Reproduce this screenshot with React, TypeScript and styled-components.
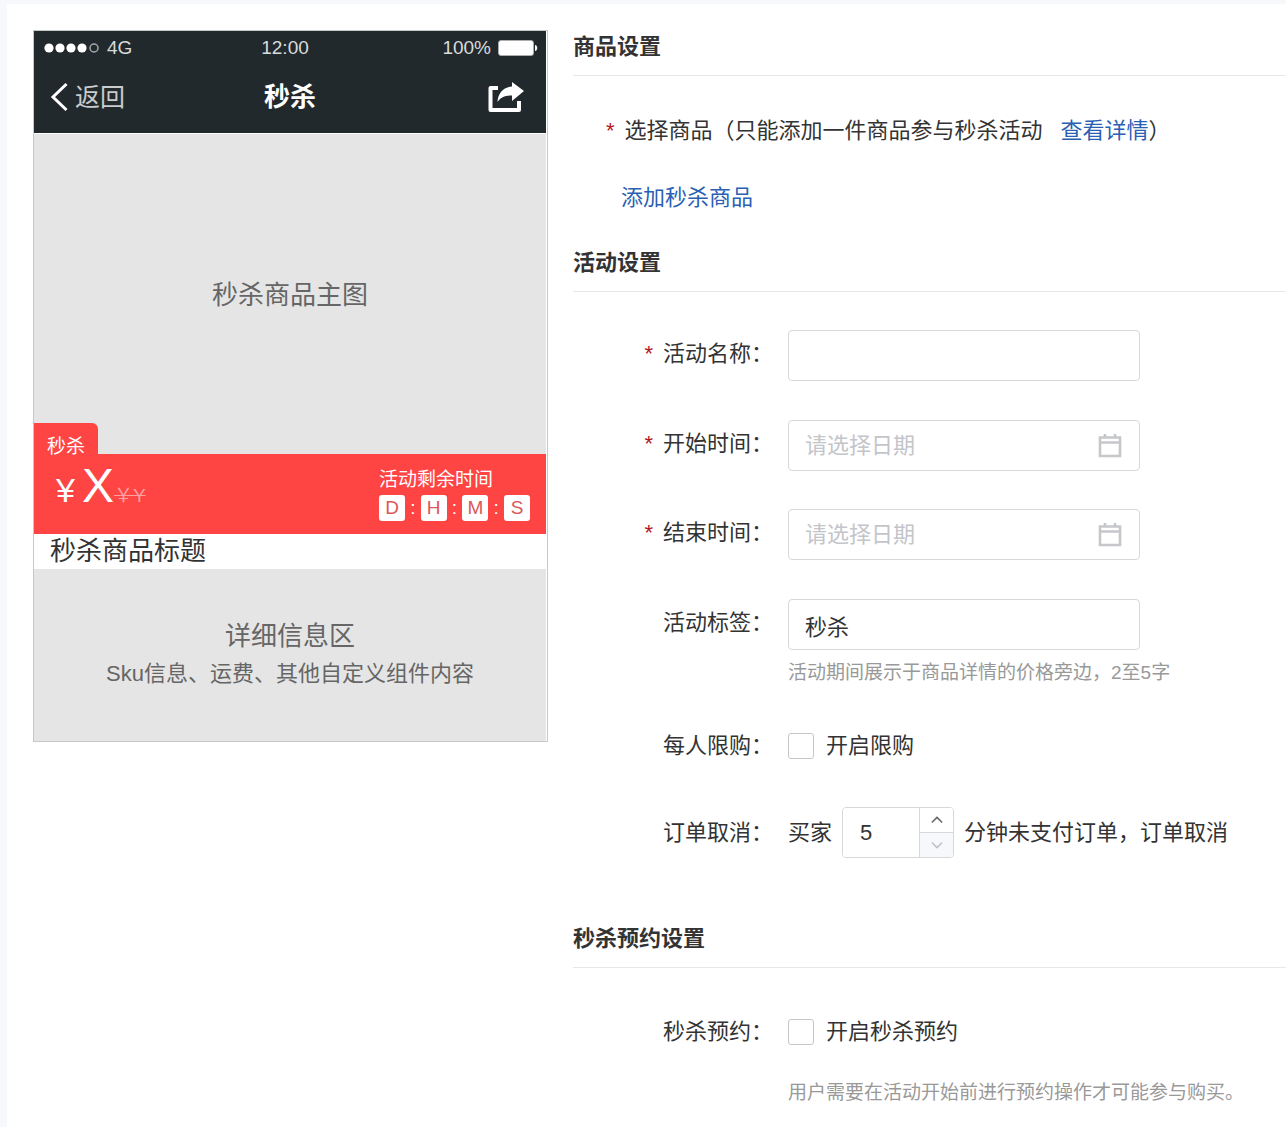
import React, { useState } from "react";
import styled, { createGlobalStyle } from "styled-components";

const GlobalStyle = createGlobalStyle`
  *, *::before, *::after { box-sizing: border-box; }
  body {
    margin: 0;
    background: #f7f8fc;
    color: #333;
    font: 22px/32px "Liberation Sans", "Noto Sans CJK SC", sans-serif;
  }
  button, input { font: inherit; color: inherit; }
  h1, h2, p { margin: 0; }
`;

const Page = styled.main`
  display: flex;
  align-items: flex-start;
  gap: 25px;
  min-height: calc(100vh - 4px);
  margin: 4px 0 0 7px;
  padding: 26px 0 16px 26px;
  background: #fff;
`;

const Phone = styled.section`
  flex: 0 0 515px;
  padding-right: 1px;
  border: 1px solid #c8c8c8;
  background: #fff;
  color: #666;
`;

const PhoneHeader = styled.header`
  height: 102px;
  margin-bottom: 1px;
  background: #22292c;
  color: #fff;
`;

const StatusBar = styled.div`
  display: grid;
  grid-template-columns: 1fr auto 1fr;
  align-items: center;
  height: 34px;
  padding: 0 8px 0 10px;
  color: #d9dbdc;
  font-size: 19px;
  line-height: 24px;
`;

const StatusGroup = styled.div<{ $end?: boolean }>`
  display: flex;
  align-items: center;
  justify-content: ${(p) => (p.$end ? "flex-end" : "flex-start")};
  gap: 7px;
`;

const Clock = styled.span`
  padding-right: 12px;
`;

const TitleBar = styled.div`
  display: grid;
  grid-template-columns: 1fr auto 1fr;
  align-items: center;
  height: 64px;
  padding: 0 22px 0 16px;
`;

const BackButton = styled.button`
  display: flex;
  align-items: center;
  gap: 6px;
  justify-self: start;
  padding: 0;
  border: 0;
  background: none;
  color: #c9cbcc;
  font-size: 25px;
  line-height: 36px;
`;

const ShareButton = styled.button`
  display: flex;
  justify-self: end;
  padding: 0;
  border: 0;
  background: none;
`;

const PhoneTitle = styled.h1`
  padding-left: 6px;
  font-size: 26px;
  line-height: 36px;
`;

const ImageArea = styled.div`
  display: flex;
  flex-direction: column;
  height: 320px;
  background: #e5e5e5;
`;

const ImageText = styled.div`
  flex: 1;
  padding-top: 143px;
  text-align: center;
  font-size: 26px;
  line-height: 36px;
`;

const Tag = styled.span`
  align-self: flex-start;
  height: 31px;
  padding: 8px 13px 0 13px;
  border-radius: 0 6px 0 0;
  background: #ff4444;
  color: #fff;
  font-size: 19px;
  line-height: 32px;
`;

const PriceBar = styled.div`
  display: flex;
  justify-content: space-between;
  height: 80px;
  padding: 0 16px 0 22px;
  background: #ff4444;
  color: #fff;
`;

const Price = styled.div`
  display: flex;
  align-items: baseline;
  font-size: 34px;
  line-height: 64px;
`;

const Amount = styled.span`
  padding-left: 7px;
  font-size: 48px;
`;

const OldPrice = styled.del`
  color: #ffa0a0;
  font-size: 19px;
`;

const Countdown = styled.div`
  padding-top: 12px;
  font-size: 19px;
  line-height: 28px;
`;

const Units = styled.div`
  display: flex;
  align-items: center;
  justify-content: space-between;
  width: 151px;
`;

const Unit = styled.span`
  width: 26px;
  border-radius: 3px;
  background: #fff;
  color: #dd5757;
  text-align: center;
  line-height: 26px;
`;

const ProductTitle = styled.p`
  padding: 0 16px;
  color: #333;
  font-size: 26px;
  line-height: 35px;
`;

const Details = styled.div`
  height: 172px;
  padding-top: 48px;
  background: #e5e5e5;
  text-align: center;
  line-height: 38px;
`;

const DetailsTitle = styled.p`
  font-size: 26px;
`;

const Form = styled.form`
  flex: 1;
  min-width: 0;
`;

const SectionTitle = styled.h2`
  padding: 1px 0 12px;
  border-bottom: 1px solid #e8e8e8;
  font-size: 22px;
  line-height: 32px;
`;

const Section = styled.section<{ $gap: number }>`
  margin-bottom: ${(p) => p.$gap}px;
`;

const GoodsLine = styled.div`
  padding: 39px 0 0 33px;
`;

const Star = styled.span`
  margin-right: 10px;
  color: #b3181c;
`;

const Link = styled.a`
  margin-left: 18px;
  color: #2a5fb4;
  text-decoration: none;
`;

const AddButton = styled.button`
  display: block;
  margin: 35px 0 0 48px;
  padding: 0;
  border: 0;
  background: none;
  color: #2a5fb4;
`;

const Row = styled.div<{ $top: number }>`
  display: grid;
  grid-template-columns: 200px 1fr;
  column-gap: 15px;
  padding-top: ${(p) => p.$top}px;
`;

const LabelCell = styled.label<{ $top?: number }>`
  padding-top: ${(p) => p.$top ?? 0}px;
  text-align: right;
  white-space: nowrap;
`;

const Box = styled.div`
  display: flex;
  align-items: center;
  width: 352px;
  height: 51px;
  padding: 0 17px 0 16px;
  border: 1px solid #d8d8da;
  border-radius: 4px;
`;

const TextInput = styled.input`
  flex: 1;
  min-width: 0;
  height: 46px;
  padding: 0;
  border: 0;
  outline: 0;
  background: none;
  &::placeholder { color: #c3c5ca; opacity: 1; }
`;

const Hint = styled.p<{ $top?: number }>`
  padding-top: ${(p) => p.$top ?? 8}px;
  color: #999;
  font-size: 19px;
  line-height: 30px;
`;

const CheckLabel = styled.label`
  display: flex;
  align-items: center;
  gap: 12px;
`;

const Checkbox = styled.input`
  appearance: none;
  width: 26px;
  height: 26px;
  margin: 0;
  border: 1px solid #c4c6ca;
  border-radius: 3px;
  background: #fff;
  &:checked { background: #2a5fb4; }
`;

const Inline = styled.div`
  display: flex;
  align-items: center;
  gap: 10px;
  white-space: nowrap;
`;

const Stepper = styled.div`
  display: flex;
  width: 112px;
  height: 51px;
  overflow: hidden;
  border: 1px solid #d8d8da;
  border-radius: 4px;
`;

const StepInput = styled.input`
  width: 76px;
  padding: 0 17px;
  border: 0;
  outline: 0;
`;

const StepButtons = styled.div`
  display: flex;
  flex: 1;
  flex-direction: column;
  border-left: 1px solid #d8d8da;
`;

const StepButton = styled.button`
  display: flex;
  flex: 1;
  align-items: center;
  justify-content: center;
  padding: 0;
  border: 0;
  background: #fff;
  color: #666;
  & + & { border-top: 1px solid #d8d8da; }
  &:disabled { background: #f6f8fb; color: #bfc2c8; }
`;

const SignalIcon = () => (
  <svg width="56" height="12" viewBox="0 0 56 12" aria-hidden="true">
    {[5, 16, 27, 38].map((x) => (
      <circle key={x} cx={x} cy="6" r="4.6" fill="#fff" />
    ))}
    <circle cx="50" cy="6" r="4" fill="none" stroke="#a5a9ab" strokeWidth="1.5" />
  </svg>
);

const BatteryIcon = () => (
  <svg width="40" height="16" viewBox="0 0 40 16" aria-hidden="true">
    <rect x="0.5" y="0.5" width="35" height="15" rx="2.5" fill="#fff" stroke="#a9adaf" />
    <path d="M37 5c3 0 3 6 0 6z" fill="#fff" />
  </svg>
);

const BackIcon = () => (
  <svg width="19" height="30" viewBox="0 0 19 30" aria-hidden="true">
    <path d="M16.500 2L3 15L16.500 28" fill="none" stroke="#fff" strokeWidth="3" />
  </svg>
);

const ShareIcon = () => (
  <svg width="36" height="32" viewBox="0 0 36 32" aria-hidden="true">
    <path d="M10 7H2.500V29H31V20" fill="none" stroke="#fff" strokeWidth="4" strokeLinejoin="round" />
    <path d="M24 1L36 10L24 20V14.500C17 14.500 13 16 9.500 21C10 12 15.500 6 24 5.500Z" fill="#fff" />
  </svg>
);

const CalendarIcon = () => (
  <svg width="24" height="26" viewBox="0 0 24 26" fill="none" stroke="#c6c7cb" strokeWidth="2.6" aria-hidden="true">
    <path d="M2 4.500H22V23H2ZM2 9.500H22M7 1V4M17 1V4" />
  </svg>
);

const Chevron = ({ up }: { up?: boolean }) => (
  <svg width="12" height="8" viewBox="0 0 14 8" fill="none" stroke="currentColor" strokeWidth="1.8" aria-hidden="true">
    <path d={up ? "M1 7L7 1L13 7" : "M1 1L7 7L13 1"} />
  </svg>
);

type FieldProps = {
  id: string;
  label: string;
  top: number;
  required?: boolean;
  date?: boolean;
  value?: string;
  hint?: string;
};

const Field = ({ id, label, top, required, date, value, hint }: FieldProps) => (
  <Row $top={top}>
    <LabelCell htmlFor={id} $top={8}>
      {required && <Star>*</Star>}
      {label}：
    </LabelCell>
    <div>
      <Box>
        <TextInput id={id} defaultValue={value} placeholder={date ? "请选择日期" : undefined} />
        {date && <CalendarIcon />}
      </Box>
      {hint && <Hint>{hint}</Hint>}
    </div>
  </Row>
);

const PhonePreview = () => (
  <Phone>
    <PhoneHeader>
      <StatusBar>
        <StatusGroup>
          <SignalIcon />
          <span>4G</span>
        </StatusGroup>
        <Clock>12:00</Clock>
        <StatusGroup $end>
          <span>100%</span>
          <BatteryIcon />
        </StatusGroup>
      </StatusBar>
      <TitleBar>
        <BackButton type="button">
          <BackIcon />
          返回
        </BackButton>
        <PhoneTitle>秒杀</PhoneTitle>
        <ShareButton type="button" aria-label="分享">
          <ShareIcon />
        </ShareButton>
      </TitleBar>
    </PhoneHeader>
    <ImageArea>
      <ImageText>秒杀商品主图</ImageText>
      <Tag>秒杀</Tag>
    </ImageArea>
    <PriceBar>
      <Price>
        ¥<Amount>X</Amount>
        <OldPrice>￥Y</OldPrice>
      </Price>
      <Countdown>
        活动剩余时间
        <Units>
          <Unit>D</Unit>:<Unit>H</Unit>:<Unit>M</Unit>:<Unit>S</Unit>
        </Units>
      </Countdown>
    </PriceBar>
    <ProductTitle>秒杀商品标题</ProductTitle>
    <Details>
      <DetailsTitle>详细信息区</DetailsTitle>
      <p>Sku信息、运费、其他自定义组件内容</p>
    </Details>
  </Phone>
);

export default function App() {
  const [minutes, setMinutes] = useState(5);
  return (
    <>
      <GlobalStyle />
      <Page>
        <PhonePreview />
        <Form>
          <Section $gap={32}>
            <SectionTitle>商品设置</SectionTitle>
            <GoodsLine>
              <Star>*</Star>选择商品（只能添加一件商品参与秒杀活动<Link href="#detail">查看详情</Link>）
            </GoodsLine>
            <AddButton type="button">添加秒杀商品</AddButton>
          </Section>
          <Section $gap={64}>
            <SectionTitle>活动设置</SectionTitle>
            <Field id="name" label="活动名称" top={38} required />
            <Field id="start" label="开始时间" top={39} required date />
            <Field id="end" label="结束时间" top={38} required date />
            <Field id="tag" label="活动标签" top={39} value="秒杀" hint="活动期间展示于商品详情的价格旁边，2至5字" />
            <Row $top={42}>
              <LabelCell as="span">每人限购：</LabelCell>
              <CheckLabel>
                <Checkbox type="checkbox" />
                开启限购
              </CheckLabel>
            </Row>
            <Row $top={45}>
              <LabelCell htmlFor="minutes" $top={10}>订单取消：</LabelCell>
              <Inline>
                买家
                <Stepper>
                  <StepInput id="minutes" value={minutes} onChange={(e) => setMinutes(Number(e.target.value) || 5)} />
                  <StepButtons>
                    <StepButton type="button" aria-label="增加" onClick={() => setMinutes(minutes + 1)}>
                      <Chevron up />
                    </StepButton>
                    <StepButton type="button" aria-label="减少" disabled={minutes <= 5} onClick={() => setMinutes(minutes - 1)}>
                      <Chevron />
                    </StepButton>
                  </StepButtons>
                </Stepper>
                分钟未支付订单，订单取消
              </Inline>
            </Row>
          </Section>
          <Section $gap={0}>
            <SectionTitle>秒杀预约设置</SectionTitle>
            <Row $top={48}>
              <LabelCell as="span">秒杀预约：</LabelCell>
              <div>
                <CheckLabel>
                  <Checkbox type="checkbox" />
                  开启秒杀预约
                </CheckLabel>
                <Hint $top={30}>用户需要在活动开始前进行预约操作才可能参与购买。</Hint>
              </div>
            </Row>
          </Section>
        </Form>
      </Page>
    </>
  );
}
